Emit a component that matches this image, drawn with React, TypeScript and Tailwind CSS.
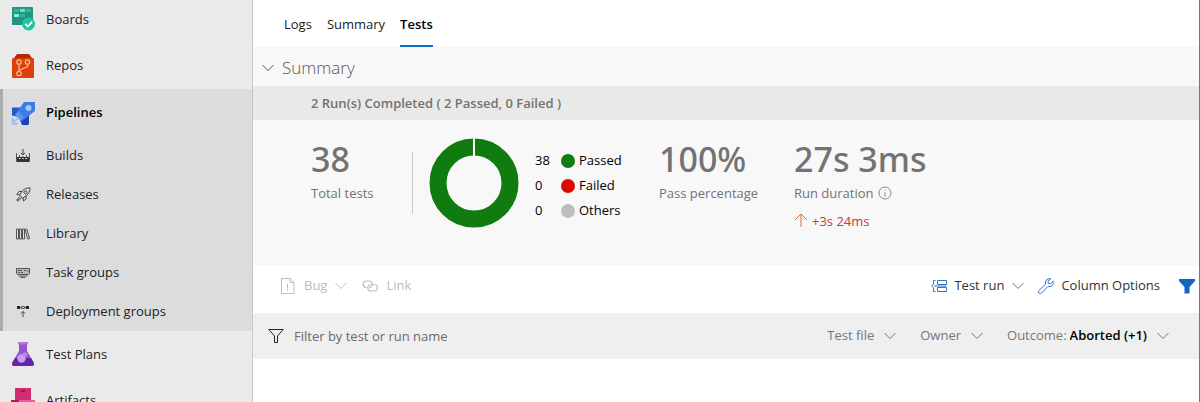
import React from 'react';

const navTop = [
  { label: 'Boards', icon: <BoardsIcon /> },
  { label: 'Repos', icon: <ReposIcon /> }
];

const pipelineItems = [
  { label: 'Builds', icon: <BuildsIcon /> },
  { label: 'Releases', icon: <ReleasesIcon /> },
  { label: 'Library', icon: <LibraryIcon /> },
  { label: 'Task groups', icon: <TaskGroupsIcon /> },
  { label: 'Deployment groups', icon: <DeploymentIcon /> }
];

const navBottom = [
  { label: 'Test Plans', icon: <TestPlansIcon /> },
  { label: 'Artifacts', icon: <ArtifactsIcon /> }
];

const legend = [
  { label: 'Passed', count: 38, dot: 'bg-[#107c10]' },
  { label: 'Failed', count: 0, dot: 'bg-[#da0a00]' },
  { label: 'Others', count: 0, dot: 'bg-[#bdbdbd]' }
];

function BoardsIcon() {
  return <svg width="24" height="24" viewBox="0 0 24 24" aria-hidden="true">
      <rect x="1" y="0" width="21" height="18" rx="1" fill="#1f9680" />
      <path d="M3 2h5v3H3zM15 2h5v3h-5zM9 7h5v3H9z" fill="#37b59c" />
      <path d="M9 2h5v3H9z" fill="#6fe0c6" />
      <path d="M3 7h5v3H3z" fill="#8ff0d8" />
      <circle cx="17.500" cy="17" r="6.500" fill="#1cc7a2" />
      <path d="M14.300 17l2.500 2.500 4.400-4.600" fill="none" stroke="#fff" strokeWidth="1.800" />
    </svg>;
}

function ReposIcon() {
  return <svg width="24" height="24" viewBox="0 0 24 24" aria-hidden="true">
      <path d="M6 0h12l3 4v3H3V4z" fill="#b52a05" />
      <path d="M2 4h20l1 1V23a1 1 0 0 1-1 1H2a1 1 0 0 1-1-1V5z" fill="#dd4008" />
      <g fill="none" stroke="#ffb38f" strokeWidth="1.300">
        <circle cx="8" cy="8" r="2.200" />
        <circle cx="16.500" cy="8" r="2.200" />
        <circle cx="8" cy="19.500" r="2.200" />
        <path d="M8 10.200v7M16.500 10.200v2.300L8 16.500" />
      </g>
    </svg>;
}

function PipelinesIcon() {
  return <svg width="24" height="24" viewBox="0 0 24 24" aria-hidden="true">
      <path d="M1 6.500h9l-5 9-4-1z" fill="#2459c9" />
      <path d="M18 14v9l-1 1h-6l-2-5z" fill="#1747b5" />
      <path d="M13 1h11v9L11 20l-7-6z" fill="#3d7be8" />
      <path d="M4 14l3-4 6 6-3 4z" fill="#5a96f2" />
      <circle cx="17.500" cy="7" r="3" fill="#a3c6ff" />
      <path d="M1.700 17v5.800h5M3 21l5-5" fill="none" stroke="#8cb4fa" strokeWidth="1.500" />
    </svg>;
}

function BuildsIcon() {
  return <svg width="14" height="14" viewBox="0 0 14 14" aria-hidden="true">
      <path d="M7 0v6M4.800 3.800L7 6l2.200-2.200" fill="none" stroke="#444" strokeWidth="1" />
      <path d="M.5 4v8.500h13V4" fill="none" stroke="#555" strokeWidth="1" />
      <path d="M3.500 6v3M10.500 6v3M7 7v2" fill="none" stroke="#555" strokeWidth="1" />
      <path d="M1 8h12v5H1z" fill="#333" />
      <path d="M3 9.500h1.500M6.200 9.500h1.500M9.500 9.500H11" stroke="#eee" strokeWidth="1.200" />
    </svg>;
}

function ReleasesIcon() {
  return <svg width="15" height="15" viewBox="0 0 15 15" fill="none" stroke="#444" strokeWidth="1" aria-hidden="true">
      <path d="M14 .8C10.500.8 8 2 6.200 4.200L3.500 8l3.200 3.200 3.800-2.700C13 6.500 14.200 4.200 14 .8z" />
      <path d="M6 4.500H3L.8 7.500l3 .3M10.200 8.800v3L7.500 14l-.5-3M3.800 9.500L2.500 11l1.300 1.300L5.500 11" />
      <circle cx="9.500" cy="5.300" r="1.500" />
      <circle cx="1.800" cy="13" r="1" />
    </svg>;
}

function LibraryIcon() {
  return <svg width="14" height="12" viewBox="0 0 14 12" fill="none" stroke="#555" strokeWidth="1" aria-hidden="true">
      <path d="M.5 1h2v10h-2zM3.500 1h2v10h-2zM6.500 1h2v10h-2zM9 1.300L10.800 1l2.700 9.500-1.800.5z" />
    </svg>;
}

function TaskGroupsIcon() {
  return <svg width="14" height="10" viewBox="0 0 14 10" fill="none" stroke="#555" strokeWidth="1" aria-hidden="true">
      <path d="M.5.5h13v5l-1 1h-11l-1-1z" fill="#bbb" />
      <path d="M2 2.500h4M2 4.500h2M5 4.500h2M8 2.500h2M11 3h1.500" />
      <path d="M2.500 8h9M4.500 9.500h5" />
    </svg>;
}

function DeploymentIcon() {
  return <svg width="14" height="14" viewBox="0 0 14 14" aria-hidden="true">
      <path d="M1 1h3v3H1zM10 1h3v3h-3z" fill="#222" />
      <path d="M5.500 1.500h3v2h-3zM4 2.500h1.500M8.500 2.500H10" fill="none" stroke="#555" />
      <path d="M7 12V6.500M5 8.500l2-2 2 2" fill="none" stroke="#444" />
    </svg>;
}

function TestPlansIcon() {
  return <svg width="24" height="24" viewBox="0 0 24 24" aria-hidden="true">
      <path d="M8 2h8v7l6.700 11.500c1 2-.2 3.500-2 3.500H3.300c-1.800 0-3-1.500-2-3.500L8 9z" fill="#9355d0" />
      <path d="M4 16h16l2.700 4.500c1 2-.2 3.500-2 3.500H3.300c-1.800 0-3-1.500-2-3.500z" fill="#6526aa" />
      <rect x="7" y="0" width="10" height="2.500" rx=".5" fill="#ad79df" />
      <circle cx="10.500" cy="16.500" r="4.200" fill="#c79df0" />
      <circle cx="14" cy="12.500" r="2.200" fill="#b988e8" />
    </svg>;
}

function ArtifactsIcon() {
  return <svg width="24" height="24" viewBox="0 0 24 24" aria-hidden="true">
      <path d="M4 0h16v12H4z" fill="#cf2d6e" />
      <path d="M10 2h4v2h-4z" fill="#9f1850" />
      <path d="M0 12h12v12H0z" fill="#b51c5e" />
      <path d="M8 12h16v12H8z" fill="#ee5b9a" />
    </svg>;
}

function Chevron({ className = '' }: { className?: string }) {
  return <svg className={`shrink-0 ${className}`} width="12" height="8" viewBox="0 0 12 8" fill="none" stroke="currentColor" aria-hidden="true">
      <path d="M.5 1L6 6.500 11.500 1" />
    </svg>;
}

function NavLink({ label, icon, className }: { label: string; icon: React.ReactNode; className: string }) {
  return <a href="#" className={`flex shrink-0 items-center ${className}`}>
      <span className="flex w-[46px] justify-center">{icon}</span>
      <span className="pt-px">{label}</span>
    </a>;
}

function Sidebar() {
  return <nav className="flex w-[253px] shrink-0 flex-col border-r border-[#c8c8c8] bg-[#eaeaea] text-[#222]">
      {navTop.map((item, i) => <NavLink key={item.label} {...item} className={i === 0 ? 'h-[42px] pb-1' : 'h-[47px]'} />)}
      <div className="relative shrink-0 bg-[#dcdcdc]">
        <span className="absolute inset-y-0 left-0 w-[3px] bg-[#acacac]" />
        <NavLink label="Pipelines" icon={<PipelinesIcon />} className="h-[47px] font-semibold text-black" />
        {pipelineItems.map(item => <NavLink key={item.label} {...item} className="h-[39px]" />)}
      </div>
      {navBottom.map(item => <NavLink key={item.label} {...item} className="h-[46px]" />)}
    </nav>;
}

function Tabs() {
  return <div className="flex h-[47px] shrink-0 gap-[15px] pl-[31px] text-[#222]">
      <a href="#" className="flex items-center border-b-2 border-transparent pt-1">Logs</a>
      <a href="#" className="flex items-center border-b-2 border-transparent pt-1">Summary</a>
      <a href="#" aria-current="page" className="flex items-center border-b-2 border-[#0a6cce] pt-1 font-semibold text-black">Tests</a>
    </div>;
}

function Stat({ value, label, children }: { value: string; label: React.ReactNode; children?: React.ReactNode }) {
  return <div className="pt-[19px] whitespace-nowrap text-[#737373]">
      <div className="font-['Noto_Sans',sans-serif] text-[34px] leading-10 font-medium">{value}</div>
      <div className="mt-1 flex items-center leading-5">{label}</div>
      {children}
    </div>;
}

function Donut() {
  return <svg width="90" height="90" viewBox="0 0 90 90" role="img" aria-label="38 passed">
      <circle cx="45" cy="45" r="36" fill="none" stroke="#107c10" strokeWidth="17" />
      <path d="M45 0v18" stroke="#fff" strokeWidth="2" />
    </svg>;
}

function SummaryPanel() {
  return <section className="shrink-0 bg-[#f8f8f8]">
      <h2>
        <button className="flex h-[39px] items-center pt-0.5 pl-[9px] text-[17px] font-light text-[#555]">
          <Chevron className="mr-2" />
          Summary
        </button>
      </h2>
      <div className="flex h-[34px] items-center bg-[#e9e9e9] pt-0.5 pl-[58px] font-semibold text-[#737373]">
        2 Run(s) Completed ( 2 Passed, 0 Failed )
      </div>
      <div className="flex h-[145px] items-start pl-[58px]">
        <div className="w-[101px] shrink-0">
          <Stat value="38" label="Total tests" />
        </div>
        <div className="mt-8 h-[62px] w-px bg-[#c8c8c8]" />
        <div className="ml-4 pt-[18px]">
          <Donut />
        </div>
        <ul className="ml-4 w-[124px] pt-7 text-black">
          {legend.map(item => <li key={item.label} className="flex h-[25px] items-center">
              <span className="w-[26px]">{item.count}</span>
              <span className={`mr-1 size-[14px] rounded-full ${item.dot}`} />
              {item.label}
            </li>)}
        </ul>
        <div className="w-[135px] shrink-0">
          <Stat value="100%" label="Pass percentage" />
        </div>
        <Stat value="27s 3ms" label={<>
              Run duration
              <svg className="ml-1" width="14" height="14" viewBox="0 0 14 14" fill="none" stroke="#888" aria-hidden="true">
                <circle cx="7" cy="7" r="6" />
                <path d="M7 6v4.500M7 3.500v1.200" />
              </svg>
            </>}>
          <div className="mt-2 flex items-center leading-5 text-[#c8383a]">
            <svg className="mr-1" width="14" height="16" viewBox="0 0 14 16" fill="none" stroke="#dd6a2b" aria-hidden="true">
              <path d="M7 14V1M1 7l6-6 6 6" />
            </svg>
            +3s 24ms
          </div>
        </Stat>
      </div>
    </section>;
}

function Toolbar() {
  return <div className="flex h-12 shrink-0 items-center pr-1 pb-1.5 pl-[27px] text-[#333]">
      <button disabled className="flex items-center text-[#bdbdbd]">
        <svg className="mr-2" width="16" height="18" viewBox="0 0 16 18" fill="none" stroke="currentColor" aria-hidden="true">
          <path d="M1.500 1.500h8.500l4 4v11H1.500zM10 1.500v4h4M7.500 7v4.500M7.500 12.500V14" />
        </svg>
        Bug
        <Chevron className="ml-2" />
      </button>
      <button disabled className="ml-[15px] flex items-center text-[#bdbdbd]">
        <svg className="mr-2" width="16" height="12" viewBox="0 0 16 12" fill="none" stroke="currentColor" strokeWidth="1.200" aria-hidden="true">
          <path d="M4.500 7.500H4A3.300 3.300 0 0 1 4 1h3.500a3.300 3.300 0 0 1 0 6.500" />
          <path d="M11.500 4.500h.7a3.200 3.200 0 0 1 0 6.500H8.500a3.300 3.300 0 0 1 0-6.500" />
        </svg>
        Link
      </button>
      <button aria-haspopup="menu" className="ml-auto flex items-center">
        <svg className="mr-[7px]" width="16" height="14" viewBox="0 0 16 14" fill="none" stroke="#2f78c8" aria-hidden="true">
          <path d="M6.500 1.500h9v4h-9zM6.500 8.500h9v4h-9zM4.500 1.500h-2V5L.7 7l1.800 2v3.500h2M3 7h12.500" />
        </svg>
        Test run
        <Chevron className="ml-2 text-[#777]" />
      </button>
      <button className="ml-[14px] flex items-center">
        <svg className="mr-[7px]" width="16" height="16" viewBox="0 0 16 16" fill="none" stroke="#2f78c8" aria-hidden="true">
          <path d="M12.800.9a4 4 0 0 0-5.200 5L1 12.500A1.600 1.600 0 0 0 3.500 15l6.600-6.600a4 4 0 0 0 5-5.200l-2.600 2.500-2.200-.4-.4-2.200z" />
        </svg>
        Column Options
      </button>
      <button aria-label="Filter" className="ml-[19px]">
        <svg width="16" height="15" viewBox="0 0 16 15" fill="#1068bf" aria-hidden="true">
          <path d="M0 0h16v2l-5.500 6v6.500h-5V8L0 2z" />
        </svg>
      </button>
    </div>;
}

function FilterSelect({ label, value }: { label: string; value?: string }) {
  return <label className="flex items-center text-[#767676]">
      {value && <span className="mr-[3px]">{label}</span>}
      <select aria-label={label} className={`field-sizing-content appearance-none bg-transparent ${value ? 'font-semibold text-black' : ''}`}>
        <option>{value ?? label}</option>
      </select>
      <Chevron className="ml-[10px]" />
    </label>;
}

function FilterBar() {
  return <div className="flex h-[46px] shrink-0 items-center rounded-l bg-[#efefef] pr-[30px] pl-[15px]">
      <svg className="mr-[10px]" width="16" height="16" viewBox="0 0 16 16" fill="none" stroke="#222" aria-hidden="true">
        <path d="M.8 1.500h14.400L9.500 8v6.500h-3V8z" />
      </svg>
      <input type="text" aria-label="Filter by test or run name" placeholder="Filter by test or run name" className="min-w-0 flex-1 bg-transparent pt-0.5 outline-none placeholder:text-[#6a6a6a]" />
      <div className="flex items-center gap-6">
        <FilterSelect label="Test file" />
        <FilterSelect label="Owner" />
        <FilterSelect label="Outcome:" value="Aborted (+1)" />
      </div>
    </div>;
}

export default function App() {
  return <div className="flex h-screen overflow-hidden bg-white font-['Open_Sans','Noto_Sans',sans-serif] text-[13px]">
      <Sidebar />
      <main className="flex min-w-0 flex-1 flex-col border-r border-[#777]">
        <Tabs />
        <SummaryPanel />
        <Toolbar />
        <FilterBar />
      </main>
    </div>;
}
